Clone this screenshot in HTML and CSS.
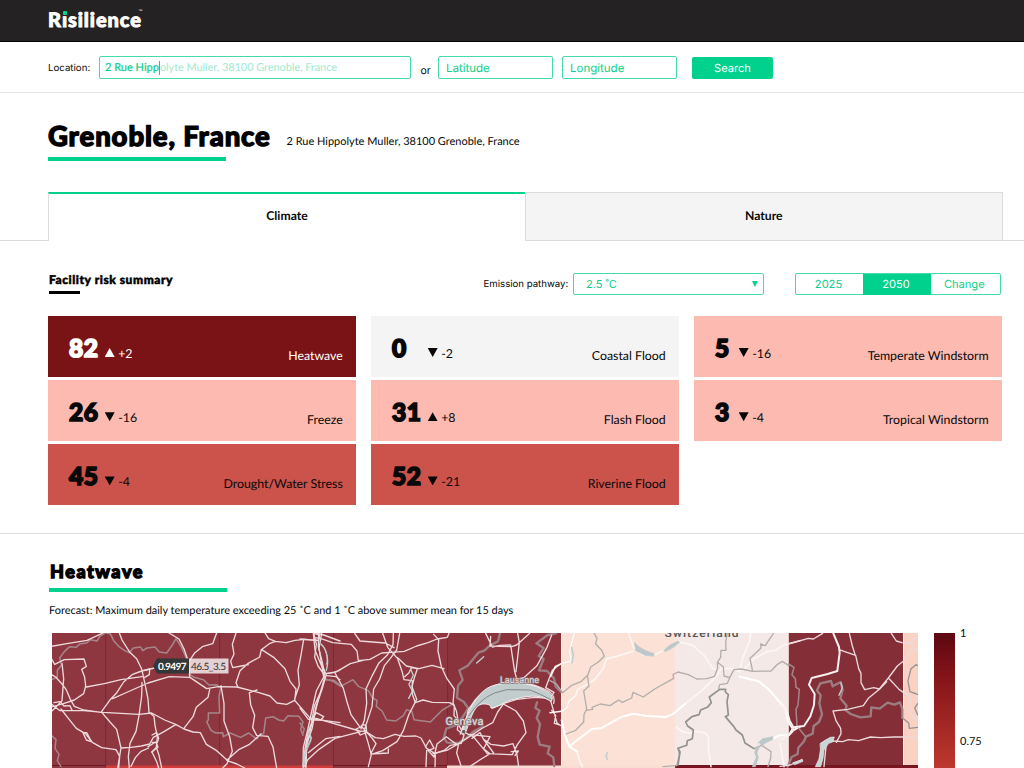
FILE: index.html
```html
<!DOCTYPE html>
<html lang="en">
<head>
<meta charset="utf-8">
<title>Risilience</title>
<link rel="stylesheet" href="styles.css">
</head>
<body>
<header class="topbar"><div class="logo">R<span class="logo-i">ı</span>silience<sup>™</sup></div></header>
<form class="search">
  <span class="label">Location:</span>
  <div class="field address"><span class="typed">2 Rue Hipp</span><span class="hint">olyte Muller, 38100 Grenoble, France</span></div>
  <span class="or">or</span>
  <div class="field latitude">Latitude</div>
  <div class="field longitude">Longitude</div>
  <div class="button">Search</div>
</form>
<section class="place">
  <h1>Grenoble, France</h1>
  <p>2 Rue Hippolyte Muller, 38100 Grenoble, France</p>
</section>
<nav class="tabs"><div class="tab active">Climate</div><div class="tab">Nature</div></nav>
<section class="summary">
  <div class="summary-head">
    <h2>Facility risk summary</h2>
    <span class="pathway">Emission pathway:</span>
    <div class="field select"><span>2.5 ˚C</span><i class="caret"></i></div>
    <div class="years"><span>2025</span><span class="on">2050</span><span>Change</span></div>
  </div>
  <div class="cards">
    <div class="card severe"><b>82</b><i class="tri up"></i><span>+2</span><em>Heatwave</em></div>
    <div class="card none"><b>0</b><i class="tri down"></i><span>-2</span><em>Coastal Flood</em></div>
    <div class="card low single"><b>5</b><i class="tri down"></i><span>-16</span><em>Temperate Windstorm</em></div>
    <div class="card low"><b>26</b><i class="tri down"></i><span>-16</span><em>Freeze</em></div>
    <div class="card low"><b>31</b><i class="tri up"></i><span>+8</span><em>Flash Flood</em></div>
    <div class="card low single"><b>3</b><i class="tri down"></i><span>-4</span><em>Tropical Windstorm</em></div>
    <div class="card high"><b>45</b><i class="tri down"></i><span>-4</span><em>Drought/Water Stress</em></div>
    <div class="card high"><b>52</b><i class="tri down"></i><span>-21</span><em>Riverine Flood</em></div>
  </div>
</section>
<section class="hazard">
  <h2>Heatwave</h2>
  <p>Forecast: Maximum daily temperature exceeding 25 ˚C and 1 ˚C above summer mean for 15 days</p>
  <div class="map-row">
    <svg class="map" width="866" height="135" viewBox="52 633 866 135">
      <rect x="52" y="633" width="509" height="135" fill="#8f3740"/>
      <rect x="447" y="633" width="114" height="135" fill="#8a333c"/>
      <path d="M105.700 633v135M219.700 633v135M333.500 633v135M447.500 633v135" stroke="#7c2831"/>
      <rect x="561" y="633" width="114" height="135" fill="#fbe1d6"/>
      <rect x="675" y="633" width="113" height="135" fill="#f4e9e6"/>
      <rect x="788" y="633" width="115" height="135" fill="#842e38"/>
      <rect x="903" y="633" width="15" height="135" fill="#f9d2c4"/>
      <path d="M561.500 633v135M788.300 633v135M903.500 633v135" stroke="#fff0e9"/>
      <path d="M52 765.500h54M333 765.500h114M675 765.500h243" stroke="#6e1824"/>
      <path d="M106 767h227" stroke="#d13c3a" stroke-width="3"/>
      <path d="M447 767h228" stroke="#f9ddd2" stroke-width="3"/>
      <path d="M675 767h243" stroke="#7b1520" stroke-width="2"/>
      <g transform="translate(40 550) scale(.333333)" fill="none" stroke-linejoin="round" stroke-linecap="round">
        <path class="border" d="M198 248L180 258L171 273L151 269L140 279L121 281L108 292L89 290L73 305L59 324L65 345L52 361L52 381L36 389M198 249L211 251L221 272L236 289L254 302L267 308L280 294L302 291L308 302L321 294L345 291L358 306L380 309L397 285L408 266L425 293L440 327L449 373L463 382L490 389L507 405L529 404L542 413L537 440L539 489L505 489L505 510L500 515L513 541L527 549L548 548L550 560L570 549L602 562L626 549L650 567L662 552L671 551L677 504L699 500L716 510L731 513L744 497L777 499L789 516L782 538L789 556M858 390L882 391L900 405M35 557L48 569L45 595L57 613L52 632L63 650"/>
        <g class="road">
          <path d="M35 289L85 280L141 271L189 249M238 249L246 270L268 305L290 326L305 357L314 397L324 447L327 487L342 499L345 526L352 560L349 592L336 606L350 635L356 654M35 327L44 343L73 329L132 327L139 349L125 358L134 382L137 408L131 431L103 450L70 461L35 471M35 374L47 381L66 402L78 418L91 448L103 469L131 480L183 487L209 451L229 430L251 396L278 373L305 363L343 354M66 340L71 386L66 452L35 484M35 463L60 482L131 482L189 487L297 493L335 489L374 510L407 523L432 537L459 546L481 548L499 583L530 602L561 630M139 411L193 401L243 389L306 380M218 446L256 429L324 399L388 380L450 382L500 416L535 410L591 411L657 428L690 438L711 459L740 463L764 451L809 503L834 509L900 518"/>
          <path d="M63 477L85 505L109 535L136 551L157 577L185 593L228 599L239 619L236 654M186 488L210 516L230 538L243 594L233 654M306 397L305 438L297 497L288 544L270 580L265 620L268 654M243 594L273 592L304 588L329 582L340 562L368 547L407 524M273 649L286 623L303 604L326 594M349 592L357 616L365 654M387 249L417 267L433 299L447 340L449 381M530 249L518 281L487 290L463 310L442 342M588 249L577 283L582 312L572 334L578 353L604 348L625 344M594 412L588 398L600 362L623 341L659 321L664 299L690 280L706 274L738 278L765 271L794 268L826 271M675 249L686 266L706 274M664 298L701 322L735 356L750 394L768 417L764 451M791 268L782 321L774 361L778 405L764 447M821 249L829 282L824 321L834 348L855 377L843 423L823 468L815 517L803 552L795 596L790 654M836 249L835 290L848 342L855 380L838 437L825 489L813 532L800 583L798 654M857 371L882 368L900 360M861 377L888 380L900 389M830 249L851 255L900 273M543 407L552 461L552 513L569 560L577 604L561 641L548 654M509 418L504 442L469 472L459 500L431 536M651 420L628 428L632 464L644 496L638 533L650 556L684 559L699 591L710 654M561 630L596 599L627 584L663 552M561 632L591 642L614 654M805 608L857 566L900 559"/>
          <path d="M42 458L60 455L72 468L90 467L96 481M311 362L329 357L328 374L314 382M336 555L350 548L356 565L352 577L336 577M324 590L347 576L354 591L335 606M816 508L829 488L851 500L842 510L815 510M821 250L839 255L836 272L823 269M129 548L140 548L154 575L139 570Z"/>
        </g>
        <path d="M843 284C861 298 865 325 859 343M809 553L813 572L795 614L792 641" stroke="#aebfc1" stroke-width="3"/>
      </g>
      <g transform="translate(300 620) scale(.333333)" fill="none" stroke-linejoin="round" stroke-linecap="round">
        <path class="border thick" d="M600 40L594 64L570 76L553 92L535 98L503 137L478 151L488 180L474 197L471 233L492 246L505 265L488 291L473 314L439 326L431 354L442 368L475 369L500 353L521 334L548 320M768 40L743 45L709 70L731 84L716 108L731 117L717 151L741 153L762 175L767 200L783 216M711 247L706 264L719 272L710 294L720 312L713 351L719 374L749 380L743 400L760 412L763 438"/>
        <path class="border" d="M76 177L99 184L122 199L159 179L175 199L205 212L217 233L231 241L229 259L246 273L260 300L287 303L310 287L320 269L336 275L342 299L391 306L427 270L460 251M0 309L13 327L8 341"/>
        <g class="road">
          <path d="M40 40L45 90L66 141L71 171L49 213L34 279L23 330L10 382L9 440M65 40L57 85L65 133L79 164L66 208L48 260L37 323L20 374L15 440M0 57L52 61M42 53L61 55L98 68L154 73L171 93L175 122L210 118L245 99L274 97L313 94L350 78L384 68L411 57L442 52L447 40M82 160L110 155L151 131L189 121M105 159L130 205L142 249L153 284L181 323M164 40L180 63L256 69L282 83M248 40L263 82L293 116L307 157L312 179L337 182L337 223L346 248L369 240L397 247L449 248L463 256L462 287L475 301L472 329L492 346L484 370L451 376L434 390L405 401L380 385L363 354L348 348L312 349L285 343L250 356L226 353L196 334L179 333L48 295L25 298L0 264"/>
          <path d="M280 40L279 74L262 105L236 130L215 170L198 206L200 250L193 301L183 327M299 40L290 90L271 115L253 137L239 177L221 207L216 260L193 330L204 367L214 404L205 440M293 113L319 138L357 146L396 136L432 146M401 43L416 59L414 93L424 140L441 176L463 207L459 249L469 272L477 317L492 343M314 170L327 158L334 143L352 146L344 170L336 200L350 238L326 285L310 332L291 365L248 392L214 403M182 335L105 355L57 388L23 419L14 440M184 316L198 314L200 337L181 345L168 327L185 320L216 354L228 371L212 402L265 399L265 387M376 381L389 360L402 385L384 391L402 411L411 372L439 350L457 364L475 376L470 399L484 440M399 401L443 390L482 367L548 324L578 308L593 276L610 252L648 273L670 303L678 338L652 374L637 404L562 401L520 350L493 337M505 343L570 350L551 386L570 401L539 420L509 440M557 40L577 81L600 76L632 75L644 155L651 180L599 195L555 214L528 237L505 269L492 335M572 49L570 78L635 80L650 75L689 40M653 40L658 68L648 155M755 45L741 82L711 137L673 172L653 177M552 359L573 373L611 378L639 371L651 405L656 440M576 265L609 251L650 238L704 232L750 235L760 270L771 309L784 318M783 316L763 310L767 286L755 271M737 203L757 151L783 131M737 203L762 217L749 237M380 391L378 440M406 405L405 440M516 355L540 338L550 357L581 399M634 395L655 393L645 407"/>
          <path d="M481 342C500 278 525 248 566 207C602 181 666 177 733 207C762 218 765 233 761 250"/>
        </g>
        <path d="M488 329C498 289 517 240 553 211C587 181 684 183 729 209C752 216 764 231 753 245C732 228 697 222 647 237C619 239 588 267 572 263C574 257 567 251 548 252C523 255 515 287 497 337Z" fill="#c1cccd" stroke="#f2eded" stroke-width="3"/>
        <path d="M506 288C528 257 548 234 584 219L620 209L690 210L721 223L752 239" stroke="#858585" stroke-width="3"/>
        <path d="M530 129L551 110M332 148L340 166L327 193L337 213L326 235M63 72C78 84 89 119 79 151M25 328L34 355L17 390L9 438" stroke="#bed2d3" stroke-width="4"/>
        <circle cx="491" cy="335" r="5" fill="#53575a"/>
      </g>
      <g transform="translate(550 620) scale(.333333)" fill="none" stroke-linejoin="round" stroke-linecap="round">
        <path stroke="#fdf8f6" stroke-width="4.500" d="M73 40L58 94L65 123L36 130L16 139L2 169M236 40L251 83L278 104L307 107L349 88L391 66L429 76L464 108L488 145L502 150M249 94L213 105L169 117L160 144L136 177L111 194L83 208L77 226L56 245L51 263L35 274L0 278M380 322L401 337L426 340L429 334L466 338L475 351L476 395L483 440M81 394L88 421L97 440M405 252L455 212L502 167L512 147L541 145L565 153M569 156L578 113L598 65L602 40M750 62L701 75L679 90L648 96L615 115L579 150M690 370L702 440"/>
        <path stroke="#fff" stroke-width="6" d="M35 301L45 345L58 380L78 363L126 327L153 325L214 291L251 281L289 288L347 291L369 282L405 252M569 170L626 184L656 208L680 236L707 267L715 307L731 330L750 320M641 371L688 346L716 346L728 334M58 380L81 394"/>
        <path d="M0 182L19 192L38 218L65 196L94 184L113 166L122 141L145 126L163 109L155 91L137 72L141 55L133 40M112 166L117 198L101 213L110 267L102 284L101 306L77 331L48 342M109 271L128 268L126 262L151 252L180 257L206 240L217 247L245 234L249 217L280 231L314 207L371 175L369 164L384 156L415 164L440 177L471 176L494 169L503 143L502 127L512 112L513 91L528 91L527 65L532 40M502 127L520 140L522 168L539 173L552 149L574 147L608 154L600 115L611 105L633 84L632 72L646 77L654 64L670 41M605 154L663 153L681 134L697 124L716 137M339 440L380 437L388 405L384 385M612 386L635 376L663 395L662 414L654 440M506 205L509 194L532 190L539 174" stroke="#b3aeac" stroke-width="4"/>
        <path d="M384 435L390 396L384 385L410 376L412 362L427 356L430 330L413 318L407 306L426 290L447 284L452 270L472 262L484 248L478 231L509 208L527 208L526 216L535 224L531 245L535 285L526 290L551 319L558 330L577 345L585 369L612 386" stroke="#929090" stroke-width="5"/>
        <path d="M254 68C269 85 289 94 313 101L310 109L285 106L258 92ZM341 92L357 77L382 64L389 67L370 82L348 94ZM624 368L638 356L668 350L669 358L646 370L635 377L629 369ZM620 380L614 397L619 411L607 440L616 440L625 413L621 397L629 380Z" fill="#bbc7c8" stroke="#bbc7c8" stroke-width="2"/>
        <path d="M65 83L70 104L66 128M172 398L168 409L172 418" stroke="#c4ced0" stroke-width="5"/>
      </g>
      <g transform="translate(780 620) scale(.333333)" fill="none" stroke-linejoin="round" stroke-linecap="round">
        <path class="border thick" d="M23 440L35 411L53 402L55 383L71 365L78 350L98 341L101 318L117 306L126 283L118 250L122 226L111 211L121 190L153 183L158 199L182 186L188 210L181 235L200 257L196 270L212 282L241 292L272 289L274 262L299 266L323 248L343 254L360 247L367 267L367 293"/>
        <path class="border" d="M26 132L42 142L36 164L46 176L48 202L58 208L54 255L48 268L51 318L77 350"/>
        <path class="road" d="M25 72L85 55L100 57L128 40M177 89L227 106L236 146L243 160L243 188L254 209L281 203L298 207L325 174L352 138L377 118L390 91L413 88M208 40L217 78L226 106M334 40L349 63L366 68L391 69L397 59L413 52M391 69L411 91M328 177L358 209L391 232L389 264L401 295L413 300M320 185L299 207L265 235L250 257L203 268L159 273L168 302L182 325L183 341L169 367M159 363L188 365L205 359L236 362L271 351L302 353L341 351L370 351L413 353M138 379L132 440M0 439L31 435L65 420"/>
        <path stroke="#f7eff0" stroke-width="6" d="M160 40L177 81L179 98L172 153L143 162L95 174L87 194L104 222L102 255L91 289L72 318L41 322L24 349L0 359M0 254L20 270L29 302L41 323"/>
        <path d="M183 189L187 203L177 226" stroke="#c5d0d2" stroke-width="4"/>
        <path d="M384 182L393 146L408 134L413 137M384 185L390 215L413 223M413 251L404 264L413 284M367 293L386 309L388 325L413 322" stroke="#969293" stroke-width="4"/>
        <path d="M121 370L135 361L151 352L163 351L158 366L146 370L132 390L129 415L122 440L106 440L117 417L121 390ZM39 428L60 421L66 417L69 424L44 434Z" fill="#c7d6d7" stroke="#eceded" stroke-width="2"/>
      </g>
      <text class="map-label" x="500" y="682.500" textLength="39">Lausanne</text>
      <text class="map-label geneva" x="445.500" y="725" textLength="38">Geneva</text>
      <text class="country" x="664.500" y="637" textLength="74">Switzerland</text>
      <path d="M153 666l4-7.500h32v15h-32z" fill="#333738"/>
      <path d="M189 658.500h39.500v15h-39.500z" fill="#f4e6e7" fill-opacity=".88"/>
      <text class="tip" x="158" y="670" textLength="28.500">0.9497</text>
      <text class="tip place-id" x="191" y="670" textLength="35">46.5_3.5</text>
    </svg>
    <div class="scale"></div>
    <div class="ticks"><span>1</span><span>0.75</span></div>
  </div>
</section>
</body>
</html>
```

FILE: styles.css
```css
* { box-sizing: border-box; }
html { overflow: hidden; height: 100%; }
body { margin: 0; height: 768px; overflow: hidden; background: #fff; color: #080808; font-family: Lato, sans-serif; text-rendering: geometricPrecision; }
h1, h2, p { margin: 0; }
h1, h2, .card b { font-weight: 900; -webkit-text-stroke: 1.300px currentColor; }
h1, h2 { color: #000; white-space: nowrap; }
i, em { font-style: normal; }

.topbar { height: 42px; padding: 8px 48px 0; background: #252223; border-bottom: 1px solid #050505; }
.logo { color: #fff; font: 900 20px/24px Lato, sans-serif; letter-spacing: .9px; -webkit-text-stroke: .9px #fff; display: flex; }
.logo sup { font: 400 5px/9px Lato, sans-serif; letter-spacing: 0; -webkit-text-stroke: 0; margin-left: -3px; }
.logo-i { background: radial-gradient(circle at 3px 5px, #00d18c 0 2px, transparent 2.500px); }

.search { height: 51px; border-bottom: 1px solid #e4e4e4; display: flex; padding: 14px 48px 0; font-family: Inter, sans-serif; }
.label { width: 51px; font-size: 9.700px; line-height: 26px; }
.field { height: 23px; border: 1px solid #45dba8; border-radius: 2px; color: #0bcf8c; font-size: 11.500px; line-height: 22px; padding-left: 7px; white-space: nowrap; }
.address { width: 312px; font-family: Lato, sans-serif; font-size: 11px; padding: 1px 0 0 5px; display: flex; align-items: center; }
.typed { border-right: 1px solid #0bcf8c; line-height: 14px; -webkit-text-stroke: .2px; }
.hint { color: #a1e9cf; line-height: 14px; letter-spacing: -.08px; }
.or { width: 27px; padding-left: 9.500px; font-size: 10.500px; line-height: 29px; }
.latitude { width: 115px; margin-right: 9px; }
.longitude { width: 115px; margin-right: 15px; }
.button { width: 81px; height: 22px; margin-top: 1px; border-radius: 2px; background: #00d18c; color: #fff; font-size: 11.100px; line-height: 22px; text-align: center; }

.place { height: 99px; padding: 27px 48px 0; display: flex; }
.place h1 { width: 238.500px; height: 41px; font-size: 27.500px; line-height: 31px; letter-spacing: .88px; background: linear-gradient(#00d18c, #00d18c) 0 37px / 178px 4px no-repeat; }
.place p { font-size: 10.980px; line-height: 14px; padding-top: 15px; }

.tabs { display: flex; height: 49px; padding: 0 21.500px 0 48px; background: linear-gradient(#dcdcdc, #dcdcdc) 0 100% / 100% 1px no-repeat; }
.tab { width: 477.500px; border: 1px solid #dcdcdc; background: #f4f4f4; text-align: center; font-size: 12.200px; font-weight: 700; line-height: 46px; }
.tab.active { width: 477px; border-top: 2px solid #00d18c; border-right: 0; border-bottom: 0; background: #fff; line-height: 44px; }

.summary { height: 293px; padding: 32px 21.500px 0 48px; border-bottom: 1px solid #dedede; }
.summary-head { height: 43px; display: flex; }
.summary h2 { width: 435.500px; height: 21px; padding-left: 1px; font-size: 12px; line-height: 14px; letter-spacing: .55px; -webkit-text-stroke: .5px; background: linear-gradient(#000, #000) 1px 18px / 31px 3px no-repeat; }
.pathway { width: 89.500px; font: 9.650px/23px Inter, sans-serif; white-space: nowrap; }
.select { width: 191px; height: 22px; padding: 0 5px 0 12px; line-height: 21px; font-size: 11px; font-family: Inter, sans-serif; display: flex; justify-content: space-between; align-items: center; }
.caret { border: 3px solid transparent; border-top: 6px solid #0bcf8c; border-bottom: 0; }
.years { width: 205.500px; height: 22px; margin-left: 31px; border: 1px solid #45dba8; border-radius: 2px; display: grid; grid-template-columns: 67px 68px 1fr; color: #0bcf8c; font: 11.100px/21px Inter, sans-serif; text-align: center; }
.years span { padding-right: 2px; }
.years .on { background: #00d18c; color: #fff; }
.cards { display: grid; grid-template-columns: repeat(3, 308.300px); column-gap: 14.700px; row-gap: 3.500px; grid-auto-rows: 60.700px; }
.card { display: flex; padding: 0 13.500px 0 20px; font-size: 12.350px; }
.card b { width: 36.700px; padding-left: 1px; font-size: 24.500px; line-height: 65px; letter-spacing: .6px; -webkit-text-stroke-width: 1.700px; }
.single b { width: 24.700px; }
.card span { padding: 30px 0 0 3.500px; line-height: 15px; }
.card em { margin-left: auto; padding-top: 32px; line-height: 15px; white-space: nowrap; }
.tri { width: 10px; height: 9px; margin-top: 32px; background: currentColor; }
.up { clip-path: polygon(50% 0, 100% 100%, 0 100%); }
.down { clip-path: polygon(0 0, 100% 0, 50% 100%); }
.severe { background: #7a1315; color: #fff; }
.none { background: #f4f4f4; }
.low { background: #fcbab1; }
.high { background: #cc534b; }

.hazard { padding: 27px 0 0 49px; }
.hazard h2 { height: 31px; padding-left: 1px; font-size: 18px; line-height: 21px; letter-spacing: 1.550px; background: linear-gradient(#00d18c, #00d18c) 0 100% / 178px 4px no-repeat; }
.hazard p { padding-top: 11px; height: 41px; font-size: 10.950px; line-height: 16px; }
.map-row { display: flex; height: 135px; padding-left: 3px; }
.map { display: block; flex: none; }
.road { stroke: #eddadc; stroke-width: 4; }
.border { stroke: #a5868a; stroke-width: 4.500; }
.thick { stroke: #9c7d82; stroke-width: 7; }
.map-label { font: 9px Roboto, sans-serif; fill: #eee0e1; stroke: #85777a; stroke-width: 1.500px; paint-order: stroke; }
.geneva { font-size: 11px; }
.country { font: 500 12px Roboto, sans-serif; fill: #555; }
.tip { font: 700 10px Lato, sans-serif; fill: #fff; }
.place-id { font-weight: 400; fill: #333; }
.scale { width: 21px; height: 135px; margin-left: 16px; background: linear-gradient(#5d0711, #8b181b 40%, #bd382e); }
.ticks { height: 122px; margin-top: -6px; padding-left: 5px; font-size: 11px; line-height: 14px; display: flex; flex-direction: column; justify-content: space-between; }
```
